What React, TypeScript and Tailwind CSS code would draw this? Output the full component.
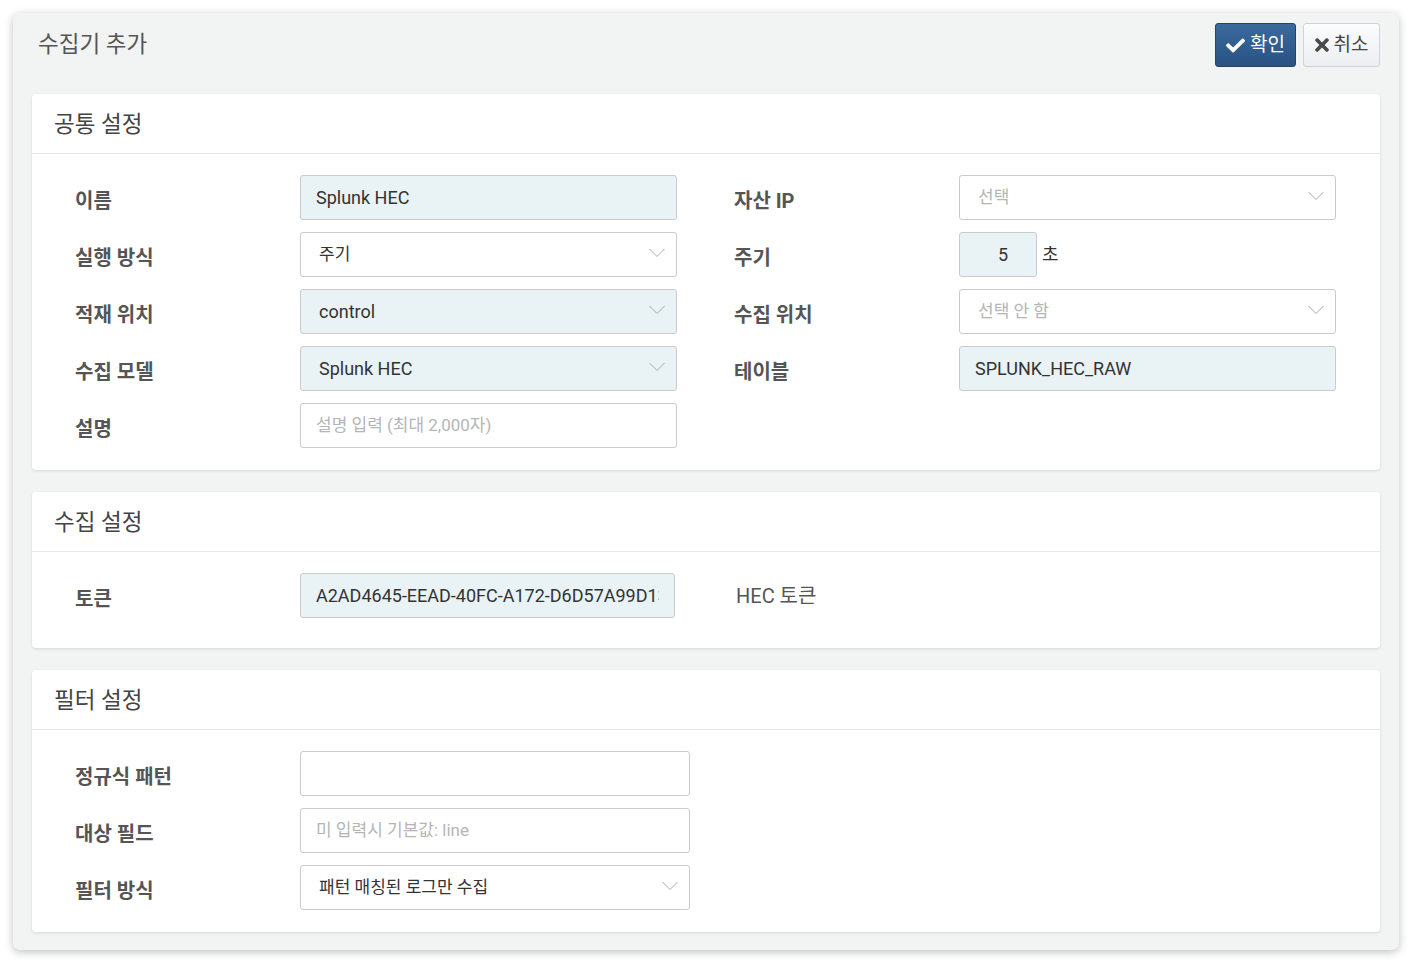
import React from 'react';
import { FaCheck, FaTimes } from 'react-icons/fa';

const Chevron = () => (
  <svg width="16" height="9" viewBox="0 0 16 9" className="absolute right-[11px] top-1/2 -translate-y-1/2 mt-[-2px]">
    <path d="M0.5 0.5 L8 8 L15.5 0.5" fill="none" stroke="#a8a8a8" strokeWidth="1" />
  </svg>
);

const Label = ({ children }: { children: React.ReactNode }) => (
  <div className="w-[225px] shrink-0 text-[20px] font-bold text-[#555] leading-none pt-[6px]">{children}</div>
);

type FieldProps = {
  value?: string;
  placeholder?: string;
  filled?: boolean;
  select?: boolean;
  ko?: boolean;
  width?: string;
};

const Field = ({ value, placeholder, filled, select, ko, width = 'w-[377px]' }: FieldProps) => (
  <div
    className={`relative ${width} h-[45px] shrink-0 rounded-[3px] border border-[#cbcbcb] flex items-center ${
      filled ? 'bg-[#e9f2f5]' : 'bg-white'
    } ${select ? 'pl-[18px] pr-[36px]' : 'pl-[15px] pr-[15px]'}`}
  >
    <div className="overflow-hidden whitespace-nowrap">
      {value ? (
        <span className={`${ko ? 'text-[17px]' : 'text-[18px]'} text-[#333]`}>{value}</span>
      ) : (
        <span className={`${ko ? 'text-[17px]' : 'text-[18px]'} text-[#b5b5b5]`}>{placeholder}</span>
      )}
    </div>
    {select && <Chevron />}
  </div>
);

const Card = ({ title, children, bodyClass = 'pb-[22px]' }: { title: string; children: React.ReactNode; bodyClass?: string }) => (
  <div className="bg-white rounded-[4px] shadow-[0_1px_3px_rgba(0,0,0,0.12)]">
    <div className="h-[60px] border-b border-[#e8eaea] flex items-center pl-[22px] pt-[3px]">
      <span className="text-[22.5px] text-[#444]">{title}</span>
    </div>
    <div className={`pt-[21px] pl-[43px] ${bodyClass}`}>{children}</div>
  </div>
);

const Row = ({ children }: { children: React.ReactNode }) => (
  <div className="flex items-center h-[45px]">{children}</div>
);

export default function App() {
  return (
    <div className="w-[1421px] h-[972px] bg-white pt-[13px] pl-[13px] font-['Roboto','Noto_Sans_CJK_KR',sans-serif]">
      <div className="w-[1386px] h-[937px] bg-[#f2f3f3] rounded-[7px] shadow-[0_2px_8px_rgba(0,0,0,0.25)] px-[19px]">
        <div className="h-[81px] flex items-start justify-between">
          <div className="text-[22.5px] text-[#555] pl-[6px] pt-[15px]">수집기 추가</div>
          <div className="flex gap-[7px] pt-[10px]">
            <button className="h-[44px] w-[81px] rounded-[3px] border border-[#24456b] bg-gradient-to-b from-[#3a6a9c] to-[#2a5283] text-white text-[19px] flex items-center justify-center gap-[5px]">
              <FaCheck className="w-[19px] h-[19px]" />
              확인
            </button>
            <button className="h-[44px] w-[77px] rounded-[3px] border border-[#cfd3d6] bg-gradient-to-b from-[#fbfcfc] to-[#eceef1] text-[#444] text-[19px] flex items-center justify-center gap-[5px]">
              <FaTimes className="w-[14px] h-[20px] text-[#4a4a4a]" />
              취소
            </button>
          </div>
        </div>

        <div className="flex flex-col gap-[22px]">
          <Card title="공통 설정">
            <div className="flex">
              <div className="flex flex-col gap-[12px]">
                <Row><Label>이름</Label><Field value="Splunk HEC" filled /></Row>
                <Row><Label>실행 방식</Label><Field value="주기" select ko /></Row>
                <Row><Label>적재 위치</Label><Field value="control" filled select /></Row>
                <Row><Label>수집 모델</Label><Field value="Splunk HEC" filled select /></Row>
                <Row><Label>설명</Label><Field placeholder="설명 입력 (최대 2,000자)" ko /></Row>
              </div>
              <div className="flex flex-col gap-[12px] ml-[57px]">
                <Row><Label>자산 IP</Label><Field placeholder="선택" select ko /></Row>
                <Row>
                  <Label>주기</Label>
                  <div className="w-[78px] h-[45px] rounded-[3px] border border-[#cbcbcb] bg-[#e9f2f5] flex items-center justify-center pl-[10px] text-[18px] text-[#333]">5</div>
                  <span className="ml-[5px] text-[18px] text-[#333] -mt-[1px]">초</span>
                </Row>
                <Row><Label>수집 위치</Label><Field placeholder="선택 안 함" select ko /></Row>
                <Row><Label>테이블</Label><Field value="SPLUNK_HEC_RAW" filled /></Row>
              </div>
            </div>
          </Card>

          <Card title="수집 설정" bodyClass="pb-[30px]">
            <Row>
              <Label>토큰</Label>
              <Field value="A2AD4645-EEAD-40FC-A172-D6D57A99D1308" filled width="w-[375px]" />
              <span className="ml-[61px] text-[20px] text-[#555]">HEC 토큰</span>
            </Row>
          </Card>

          <Card title="필터 설정">
            <div className="flex flex-col gap-[12px]">
              <Row><Label>정규식 패턴</Label><Field width="w-[390px]" /></Row>
              <Row><Label>대상 필드</Label><Field placeholder="미 입력시 기본값: line" ko width="w-[390px]" /></Row>
              <Row><Label>필터 방식</Label><Field value="패턴 매칭된 로그만 수집" select ko width="w-[390px]" /></Row>
            </div>
          </Card>
        </div>
      </div>
    </div>
  );
}
